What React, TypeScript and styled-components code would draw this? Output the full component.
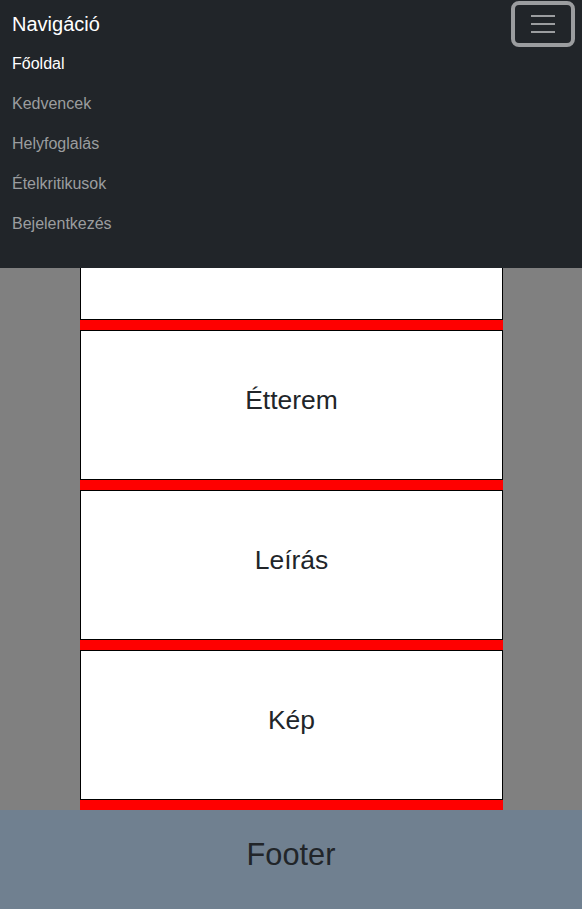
import React from "react";
import styled, { createGlobalStyle } from "styled-components";

const GlobalStyle = createGlobalStyle`
  * {
    box-sizing: border-box;
  }
  body {
    margin: 0;
    font-family: "Liberation Sans", Arial, sans-serif;
    color: #212529;
    background: #808080;
  }
`;

const Page = styled.div`
  display: flex;
  flex-direction: column;
  min-height: 909px;
`;

// fixed navbar, expanded, lies over the top of the content
const Navbar = styled.nav`
  position: fixed;
  top: 0;
  left: 0;
  right: 0;
  z-index: 10;
  background: #212529;
  padding-bottom: 24px;
`;

const TopRow = styled.div`
  display: flex;
  justify-content: space-between;
  align-items: center;
  height: 48px;
  padding: 0 7px 0 12px;
`;

const Brand = styled.a`
  font-size: 20px;
  line-height: 30px;
  padding: 5px 0;
  color: #fff;
  text-decoration: none;
`;

const Toggler = styled.button`
  display: flex;
  align-items: center;
  justify-content: center;
  width: 64px;
  height: 46px;
  padding: 0;
  background: transparent;
  border: 4px solid #9b9d9f;
  border-radius: 8px;
  cursor: pointer;
`;

const NavList = styled.ul`
  list-style: none;
  margin: -4px 0 0;
  padding: 0 12px;
`;

const NavLink = styled.a<{ $active?: boolean }>`
  display: block;
  padding: 8px 0;
  font-size: 16px;
  line-height: 24px;
  color: ${(p) => (p.$active ? "#fff" : "#9b9d9f")};
  text-decoration: none;
`;

const Main = styled.main`
  flex: 1;
  background: #808080;
  padding: 170px 79px 0 80px;
`;

const Column = styled.div`
  display: flex;
  flex-direction: column;
  gap: 10px;
  padding-bottom: 10px;
  background: #ff0000;
`;

const Box = styled.section`
  display: flex;
  align-items: center;
  justify-content: center;
  height: 150px;
  background: #fff;
  border: 1px solid #000;
`;

const BoxTitle = styled.h2`
  margin: 0 0 8px;
  font-size: 26.44px;
  font-weight: 400;
  line-height: 1.2;
`;

const Footer = styled.footer`
  display: flex;
  align-items: center;
  justify-content: center;
  height: 99px;
  background: #708090;
`;

const FooterTitle = styled.h1`
  margin: 0 0 8px;
  font-size: 30.73px;
  font-weight: 400;
  line-height: 1.2;
`;

const links = ["Főoldal", "Kedvencek", "Helyfoglalás", "Ételkritikusok", "Bejelentkezés"];
const boxes = ["Név", "Étterem", "Leírás", "Kép"];

const MenuIcon = () => (
  <svg width="26" height="20" viewBox="0 0 26 20">
    <path d="M1 2h24M1 10h24M1 18h24" stroke="#9b9d9f" strokeWidth="2" />
  </svg>
);

export default function App() {
  return (
    <>
      <GlobalStyle />
      <Page>
        <Navbar>
          <TopRow>
            <Brand href="#">Navigáció</Brand>
            <Toggler aria-label="Menü">
              <MenuIcon />
            </Toggler>
          </TopRow>
          <NavList>
            {links.map((l, i) => (
              <li key={l}>
                <NavLink href="#" $active={i === 0}>
                  {l}
                </NavLink>
              </li>
            ))}
          </NavList>
        </Navbar>
        <Main>
          <Column>
            {boxes.map((b) => (
              <Box key={b}>
                <BoxTitle>{b}</BoxTitle>
              </Box>
            ))}
          </Column>
        </Main>
        <Footer>
          <FooterTitle>Footer</FooterTitle>
        </Footer>
      </Page>
    </>
  );
}
